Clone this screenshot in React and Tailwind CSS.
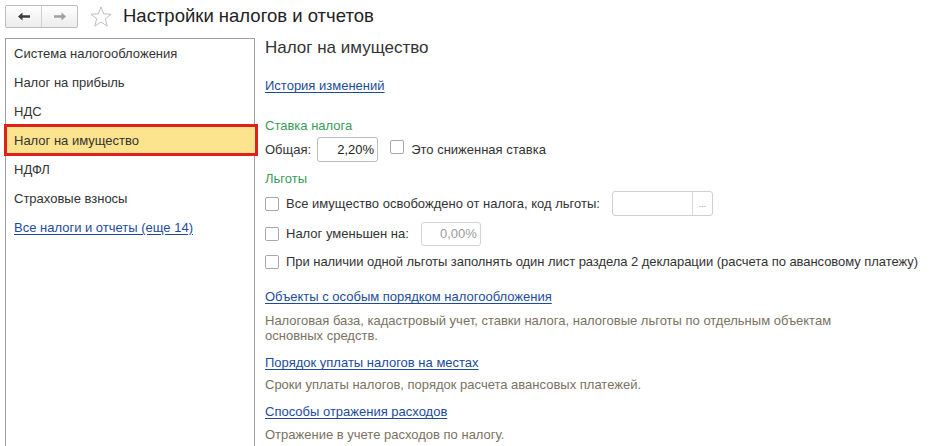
import React from "react";

const menu = [
  "Система налогообложения",
  "Налог на прибыль",
  "НДС",
  "Налог на имущество",
  "НДФЛ",
  "Страховые взносы",
];

const Checkbox = () => (
  <span className="inline-block w-[14px] h-[14px] border border-[#a8a8a8] rounded-[2px] bg-white shrink-0" />
);

const App = () => {
  return (
    <div
      className="w-[937px] h-[446px] overflow-hidden bg-white text-[13px] text-[#333]"
      style={{ fontFamily: '"Liberation Sans", Arial, sans-serif' }}
    >
      {/* Header */}
      <div className="flex items-center h-[33px] pl-[5px]">
        <div className="flex h-[23px] w-[73px] border border-[#bdbdbd] rounded-[2px] bg-gradient-to-b from-white to-[#ececec]">
          <div className="flex-1 flex items-center justify-center border-r border-[#d0d0d0]">
            <svg width="12" height="9" viewBox="0 0 12 9">
              <path d="M0 4.5 L4.5 0.5 L4.5 3.2 L12 3.2 L12 5.8 L4.5 5.8 L4.5 8.5 Z" fill="#3c3c3c" />
            </svg>
          </div>
          <div className="flex-1 flex items-center justify-center">
            <svg width="12" height="9" viewBox="0 0 12 9">
              <path d="M12 4.5 L7.5 0.5 L7.5 3.2 L0 3.2 L0 5.8 L7.5 5.8 L7.5 8.5 Z" fill="#a0a0a0" />
            </svg>
          </div>
        </div>
        <svg className="ml-[12px]" width="22" height="21" viewBox="0 0 24 23">
          <path
            d="M12 1 L14.9 8.6 L23 9 L16.7 14.1 L18.8 22 L12 17.5 L5.2 22 L7.3 14.1 L1 9 L9.1 8.6 Z"
            fill="none"
            stroke="#b8b8b8"
            strokeWidth="1"
            strokeLinejoin="round"
          />
        </svg>
        <h1 className="ml-[11px] text-[18.5px] text-[#222] leading-none">Настройки налогов и отчетов</h1>
      </div>

      {/* Body */}
      <div className="flex mt-[5px]">
        {/* Sidebar */}
        <div className="w-[250px] ml-[5px] h-[420px] border border-[#a0a0a0] shrink-0">
          {menu.map((item) => (
            <div key={item} className="relative h-[29px] flex items-center pl-[8px]">
              {item === "Налог на имущество" && (
                <div className="absolute -top-[2px] -bottom-[1px] -left-[2px] -right-[4px] border-[3px] border-[#e0201c] bg-[#fce38d]" />
              )}
              <span className="relative">{item}</span>
            </div>
          ))}
          <div className="h-[29px] flex items-center pl-[8px]">
            <span className="text-[#1d4c9c] underline underline-offset-2">Все налоги и отчеты (еще 14)</span>
          </div>
        </div>

        {/* Content */}
        <div className="ml-[10px] flex flex-col">
          <h2 className="h-[20px] flex items-center text-[17px] text-[#333]">Налог на имущество</h2>

          <div className="mt-[19px] h-[18px] flex items-center">
            <span className="text-[#1d4c9c] underline underline-offset-2">История изменений</span>
          </div>

          <div className="mt-[22px] h-[18px] flex items-center text-[#3a9a5c]">Ставка налога</div>

          <div className="mt-[2px] h-[25px] flex items-center">
            <span>Общая:</span>
            <div className="ml-[6px] w-[61px] h-[25px] border border-[#bcbcbc] rounded-[3px] flex items-center justify-end pr-[3px] text-[#222]">
              2,20%
            </div>
            <span className="ml-[12px]">
              <Checkbox />
            </span>
            <span className="ml-[7px]">Это сниженная ставка</span>
          </div>

          <div className="mt-[8px] h-[18px] flex items-center text-[#3a9a5c]">Льготы</div>

          <div className="mt-[3px] h-[25px] flex items-center">
            <Checkbox />
            <span className="ml-[7px]">Все имущество освобождено от налога, код льготы:</span>
            <div className="ml-[12px] w-[101px] h-[25px] border border-[#cfcfcf] rounded-[3px] flex">
              <div className="flex-1" />
              <div className="w-[20px] border-l border-[#d8d8d8] flex items-end justify-center pb-[6px] text-[9px] leading-none text-[#999]">
                ...
              </div>
            </div>
          </div>

          <div className="mt-[5px] h-[25px] flex items-center">
            <Checkbox />
            <span className="ml-[7px]">Налог уменьшен на:</span>
            <div className="ml-[12px] w-[60px] h-[24px] border border-[#d4d4d4] rounded-[3px] flex items-center justify-end pr-[3px] text-[#9a9a9a]">
              0,00%
            </div>
          </div>

          <div className="mt-[7px] h-[18px] flex items-center">
            <Checkbox />
            <span className="ml-[7px] tracking-[-0.05px]">
              При наличии одной льготы заполнять один лист раздела 2 декларации (расчета по авансовому платежу)
            </span>
          </div>

          <div className="mt-[17px] h-[18px] flex items-center">
            <span className="text-[#1d4c9c] underline underline-offset-2">Объекты с особым порядком налогообложения</span>
          </div>
          <div className="mt-[7px] w-[590px] leading-[15px] text-[#7a7262]">
            Налоговая база, кадастровый учет, ставки налога, налоговые льготы по отдельным объектам основных средств.
          </div>

          <div className="mt-[11px] h-[18px] flex items-center">
            <span className="text-[#1d4c9c] underline underline-offset-2">Порядок уплаты налогов на местах</span>
          </div>
          <div className="mt-[4px] h-[18px] flex items-center text-[#7a7262]">
            Сроки уплаты налогов, порядок расчета авансовых платежей.
          </div>

          <div className="mt-[9px] h-[18px] flex items-center">
            <span className="text-[#1d4c9c] underline underline-offset-2">Способы отражения расходов</span>
          </div>
          <div className="mt-[5px] h-[18px] flex items-center text-[#7a7262]">
            Отражение в учете расходов по налогу.
          </div>
        </div>
      </div>
    </div>
  );
};

export default App;
